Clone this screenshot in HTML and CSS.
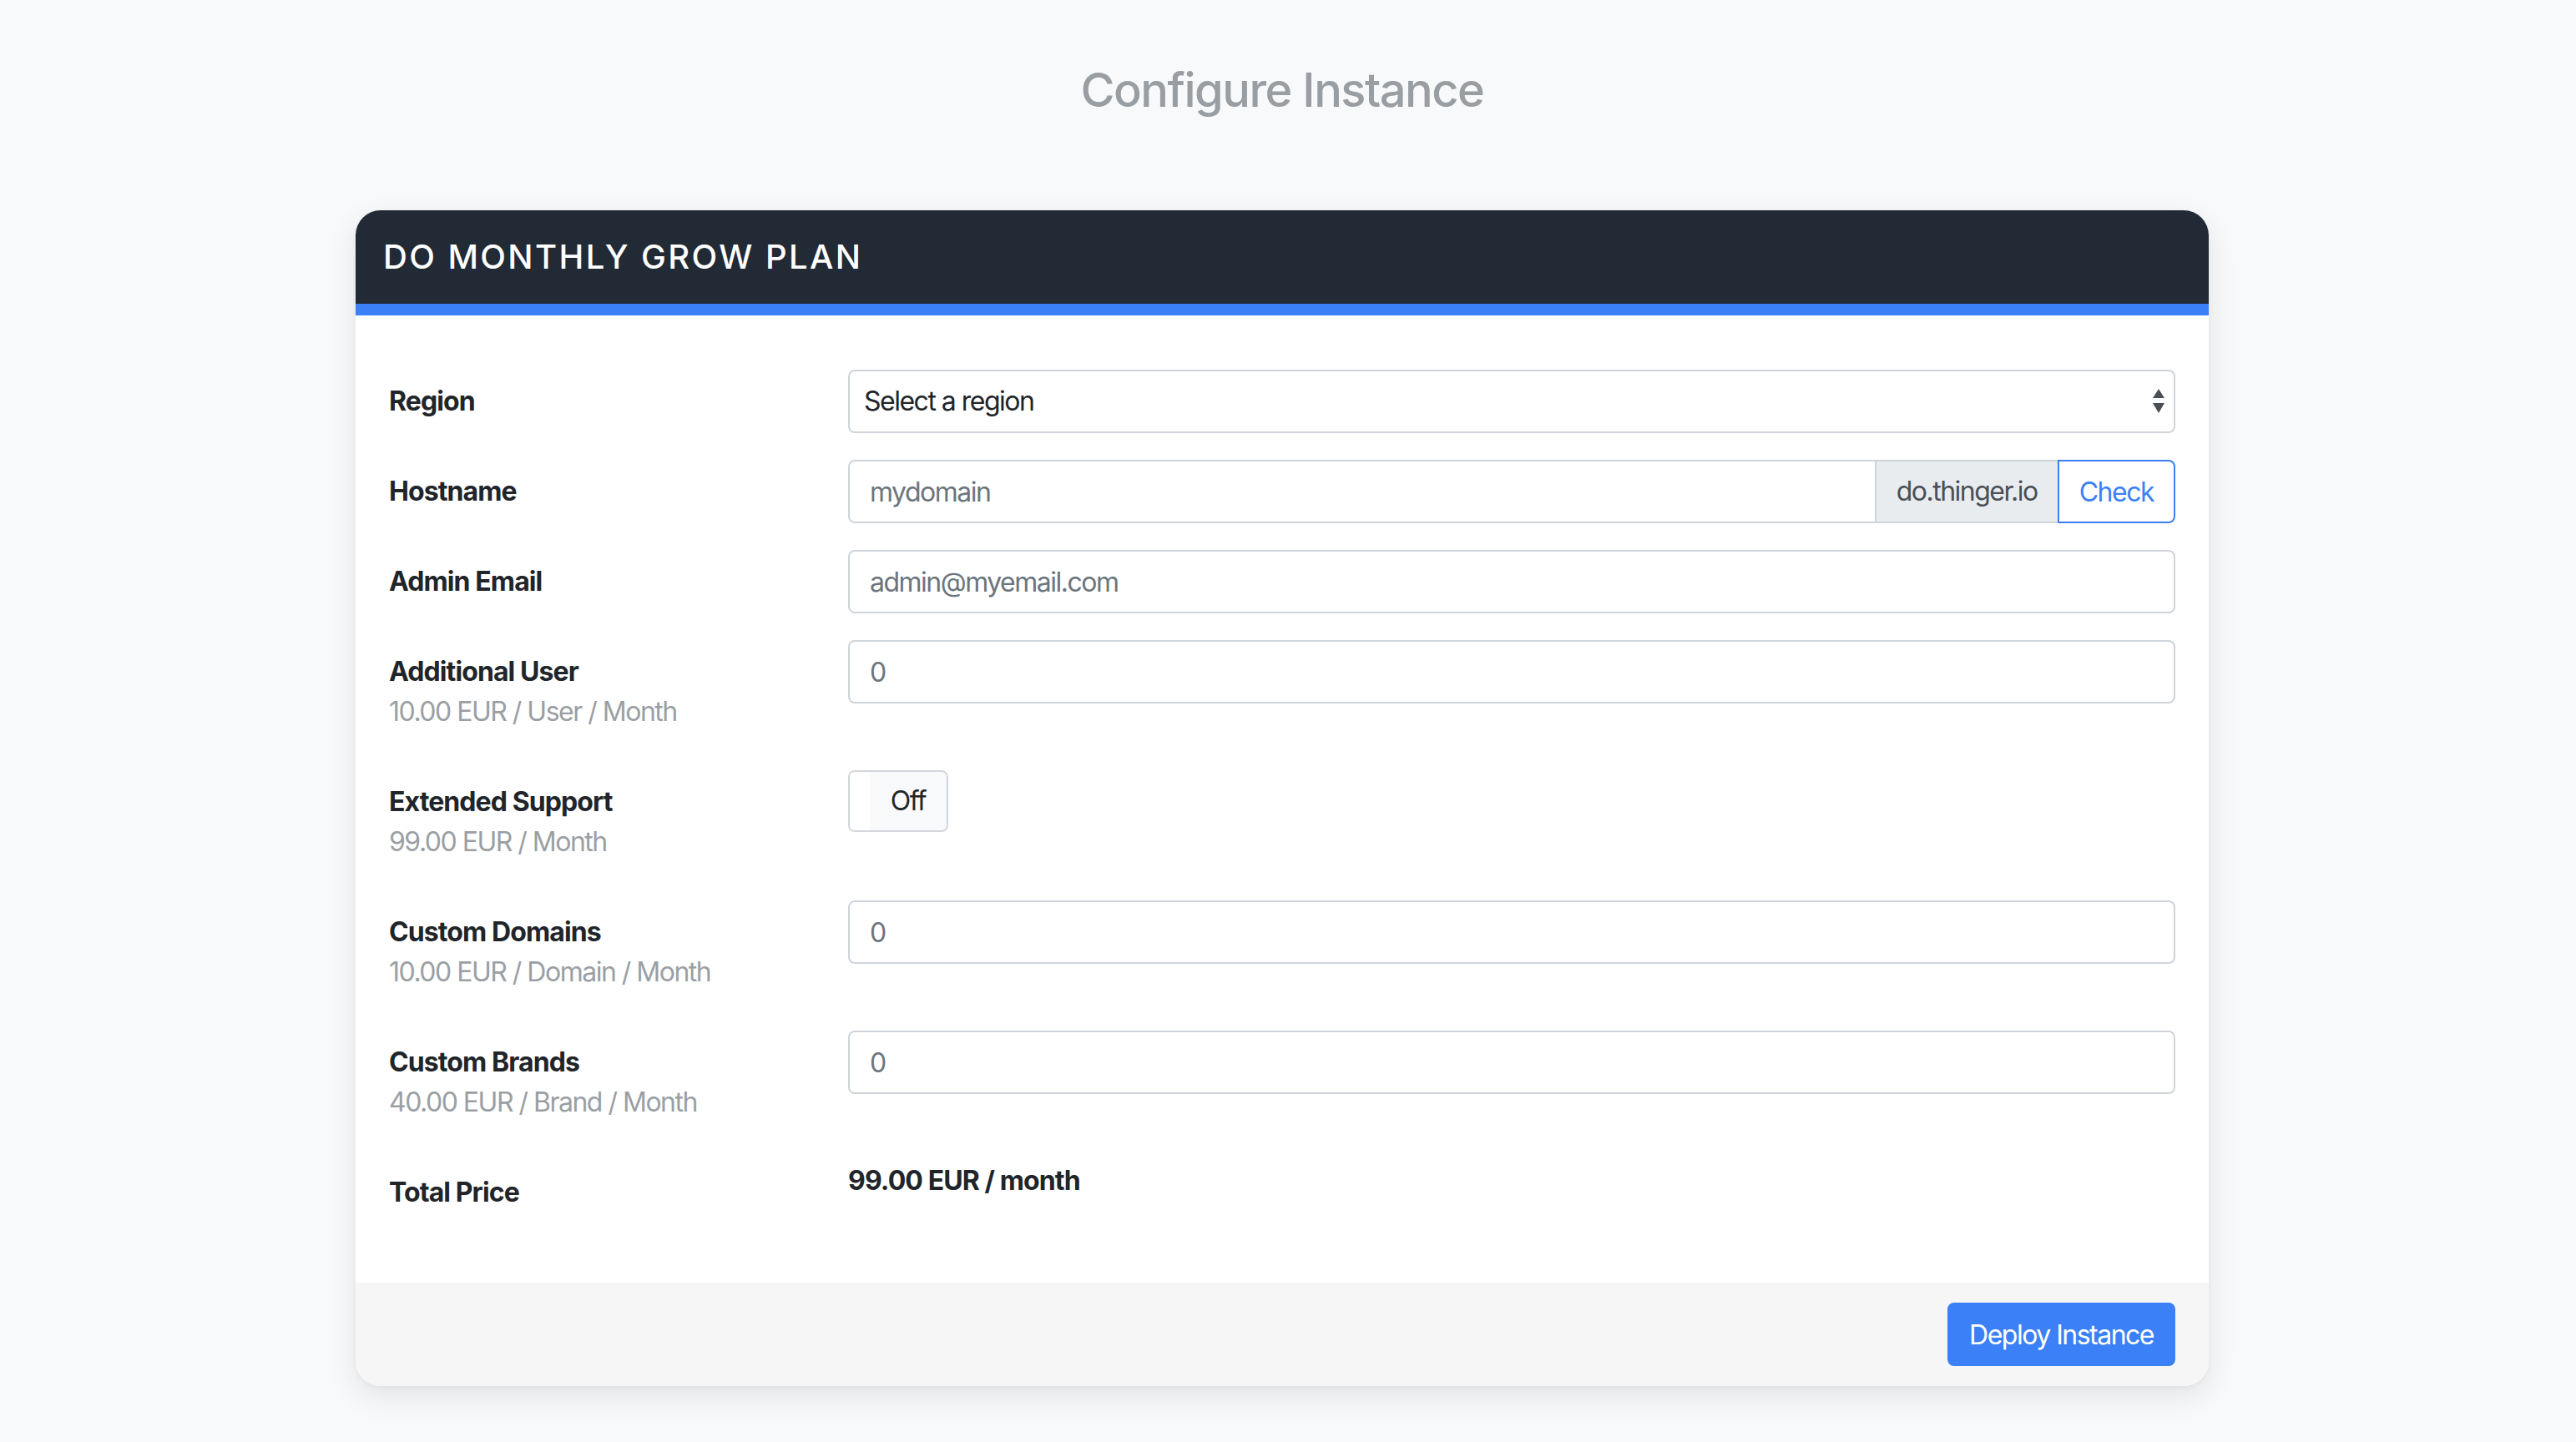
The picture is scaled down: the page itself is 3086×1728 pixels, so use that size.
FILE: index.html
```html
<!DOCTYPE html>
<html lang="en">
<head>
<meta charset="utf-8">
<title>Configure Instance</title>
<link rel="stylesheet" href="styles.css">
</head>
<body>
<div class="page">
  <h3 class="title">Configure Instance</h3>
  <div class="card">
    <div class="card-header">DO MONTHLY GROW PLAN</div>
    <div class="card-body">
      <div class="form-row">
        <label class="col-label">Region</label>
        <div class="field">
          <div class="select">
            <span>Select a region</span>
            <svg class="arrows" width="16" height="30" viewBox="0 0 16 30"><path d="M8 0 L15 11 L1 11 Z" fill="#4a4f55"/><path d="M1 17 L15 17 L8 29 Z" fill="#4a4f55"/></svg>
          </div>
        </div>
      </div>
      <div class="form-row">
        <label class="col-label">Hostname</label>
        <div class="field input-group">
          <input class="input grouped" type="text" placeholder="mydomain">
          <span class="addon">do.thinger.io</span>
          <button class="btn-check" type="button">Check</button>
        </div>
      </div>
      <div class="form-row">
        <label class="col-label">Admin Email</label>
        <div class="field">
          <input class="input" type="text" placeholder="admin@myemail.com">
        </div>
      </div>
      <div class="form-row">
        <label class="col-label">Additional User<span class="sub">10.00 EUR / User / Month</span></label>
        <div class="field">
          <input class="input" type="text" placeholder="0">
        </div>
      </div>
      <div class="form-row">
        <label class="col-label">Extended Support<span class="sub">99.00 EUR / Month</span></label>
        <div class="field">
          <div class="toggle"><span class="handle"></span><span class="toggle-text">Off</span></div>
        </div>
      </div>
      <div class="form-row">
        <label class="col-label">Custom Domains<span class="sub">10.00 EUR / Domain / Month</span></label>
        <div class="field">
          <input class="input" type="text" placeholder="0">
        </div>
      </div>
      <div class="form-row">
        <label class="col-label">Custom Brands<span class="sub">40.00 EUR / Brand / Month</span></label>
        <div class="field">
          <input class="input" type="text" placeholder="0">
        </div>
      </div>
      <div class="form-row last">
        <label class="col-label">Total Price</label>
        <div class="field total">99.00 EUR / month</div>
      </div>
    </div>
    <div class="card-footer">
      <button class="btn-primary" type="button">Deploy Instance</button>
    </div>
  </div>
</div>
</body>
</html>
```

FILE: styles.css
```css
html, body {
  margin: 0;
  padding: 0;
}
body {
  background: #f8f9fa;
  font-family: Inter, "Noto Sans", "Liberation Sans", sans-serif;
  color: #212529;
  font-size: 32px;
  line-height: 1.5;
  letter-spacing: -1.5px;
}
.page {
  width: 3072px;
  padding-top: 75px;
  padding-bottom: 60px;
}
.title {
  margin: 0 0 110px 0;
  font-size: 56px;
  line-height: 67px;
  font-weight: 500;
  letter-spacing: -1.5px;
  color: #999ea3;
  text-align: center;
}
.card {
  width: 2220px;
  margin: 0 auto;
  background: #fff;
  border-radius: 30px;
  overflow: hidden;
  box-shadow: 0 12px 36px rgba(0, 0, 0, 0.09), 0 2px 6px rgba(0, 0, 0, 0.04);
}
.card-header {
  background: #212a35;
  color: #fff;
  padding: 32px 33px;
  font-size: 40px;
  line-height: 48px;
  font-weight: 500;
  letter-spacing: 2.4px;
  border-bottom: 14px solid #3b80f6;
}
.card-body {
  padding: 65px 40px 38px 40px;
}
.form-row {
  display: grid;
  grid-template-columns: 550px 1fr;
  margin-bottom: 32px;
}
.col-label {
  display: block;
  padding: 14px 30px 14px 0;
  font-weight: 700;
  letter-spacing: -0.9px;
  line-height: 48px;
}
.sub {
  display: block;
  font-weight: 400;
  letter-spacing: -1.5px;
  color: #9a9fa4;
}
.field {
  min-width: 0;
}
.input {
  box-sizing: border-box;
  display: block;
  width: 100%;
  height: 76px;
  margin: 0;
  padding: 0 24px;
  border: 2px solid #ced4da;
  border-radius: 8px;
  background: #fff;
  font-family: inherit;
  font-size: 32px;
  letter-spacing: -1.5px;
  color: #495057;
  outline: none;
}
.input::placeholder {
  color: #6c757d;
  opacity: 1;
}
.select {
  box-sizing: border-box;
  height: 76px;
  border: 2px solid #ced4da;
  border-radius: 8px;
  background: #fff;
  padding: 0 10px 0 17px;
  display: flex;
  align-items: center;
  justify-content: space-between;
  color: #212529;
}
.arrows {
  display: block;
}
.input-group {
  display: flex;
  align-items: stretch;
}
.input.grouped {
  flex: 1 1 auto;
  width: auto;
  min-width: 0;
  border-radius: 8px 0 0 8px;
}
.addon {
  box-sizing: border-box;
  height: 76px;
  display: flex;
  align-items: center;
  padding: 0 24px;
  background: #e9ecef;
  border: 2px solid #ced4da;
  border-left: none;
  border-right: none;
  color: #495057;
  white-space: nowrap;
}
.btn-check {
  box-sizing: border-box;
  height: 76px;
  margin: 0;
  padding: 0 24px;
  background: #fff;
  border: 2px solid #3b80f6;
  border-radius: 0 8px 8px 0;
  color: #3b80f6;
  font-family: inherit;
  font-size: 32px;
  letter-spacing: -1.5px;
}
.toggle {
  box-sizing: border-box;
  width: 120px;
  height: 74px;
  border: 2px solid #d3d6da;
  border-radius: 8px;
  background: #f8f9fa;
  display: flex;
  overflow: hidden;
}
.handle {
  width: 24px;
  background: #fff;
}
.toggle-text {
  flex: 1;
  display: flex;
  align-items: center;
  justify-content: center;
  color: #212529;
}
.total {
  font-weight: 700;
  letter-spacing: -0.9px;
  line-height: 48px;
}
.card-footer {
  background: #f6f6f6;
  padding: 24px 40px;
  display: flex;
  justify-content: flex-end;
}
.btn-primary {
  box-sizing: border-box;
  height: 76px;
  margin: 0;
  padding: 0 24px;
  background: #3b80f6;
  border: 2px solid #3b80f6;
  border-radius: 8px;
  color: #fff;
  font-family: inherit;
  font-size: 32px;
  letter-spacing: -1.5px;
}
```
